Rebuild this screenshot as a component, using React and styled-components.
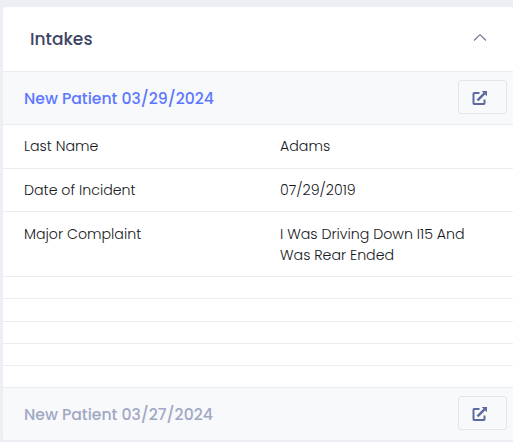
import React, { useState } from 'react'
import styled, { createGlobalStyle } from 'styled-components'

// blank answers still take up a thin row in the list
const fields = [
  { label: 'Last Name', value: 'Adams', height: 44 },
  { label: 'Date of Incident', value: '07/29/2019', height: 43 },
  { label: 'Major Complaint', value: 'I Was Driving Down I15 And Was Rear Ended', height: 65 },
  { height: 22 },
  { height: 23 },
  { height: 22 },
  { height: 22 },
  { height: 22 },
]

function OpenIcon() {
  return (
    <svg width='16' height='16' viewBox='0 0 16 16' fill='none'>
      <path d='M7.5 3H2.2Q1.5 3 1.5 3.7V13.3Q1.5 14 2.2 14H11.8Q12.5 14 12.5 13.3V9.5' stroke='#5d6aa0' strokeWidth='2' />
      <path d='M5.5 10.3L12.5 3.3' stroke='#5d6aa0' strokeWidth='2.4' />
      <path d='M9.7 1H15V6.3Z' fill='#5d6aa0' />
    </svg>
  )
}

function App() {
  const [isOpen, setIsOpen] = useState(true)

  return (
    <>
      <GlobalStyle />
      <Card>
        <CardHeader>
          <CardTitle>Intakes</CardTitle>
          <ToggleButton aria-label='Toggle intakes' onClick={() => setIsOpen((prev) => !prev)}>
            <svg width='14' height='8' viewBox='0 0 14 8' fill='none'>
              <path d='M1 6.5L7 0.7L13 6.5' stroke='#776b93' strokeWidth='1.1' />
            </svg>
          </ToggleButton>
        </CardHeader>
        {isOpen && (
          <>
            <IntakeHeader>
              <IntakeName $active>New Patient 03/29/2024</IntakeName>
              <OpenButton aria-label='Open intake'>
                <OpenIcon />
              </OpenButton>
            </IntakeHeader>
            {fields.map((field, i) => (
              <FieldRow key={i} $height={field.height}>
                {field.label && (
                  <>
                    <FieldText>{field.label}</FieldText>
                    <FieldText>{field.value}</FieldText>
                  </>
                )}
              </FieldRow>
            ))}
            <IntakeHeader $last>
              <IntakeName>New Patient 03/27/2024</IntakeName>
              <OpenButton aria-label='Open intake'>
                <OpenIcon />
              </OpenButton>
            </IntakeHeader>
          </>
        )}
      </Card>
    </>
  )
}

export default App

const GlobalStyle = createGlobalStyle`
  * {
    box-sizing: border-box;
  }
  body {
    margin: 0;
    overflow: hidden;
    background: #eeeef5;
    font-family: Poppins, Inter, sans-serif;
  }
`
const Card = styled.div`
  width: 511px;
  margin: 7px 0 0 3px;
  border-radius: 4px;
  overflow: hidden;
  background: #fff;
`
const CardHeader = styled.div`
  display: flex;
  align-items: center;
  justify-content: space-between;
  height: 65px;
  padding: 0 27px 2px;
  border-bottom: 1px solid #ebedf2;
`
const CardTitle = styled.h3`
  margin: 0;
  padding-top: 2px;
  color: #3d4465;
  font-size: 17.05px;
  font-weight: 500;
  line-height: 26px;
`
const ToggleButton = styled.button`
  display: flex;
  padding: 0;
  border: 0;
  background: none;
  cursor: pointer;
`
const IntakeHeader = styled.div`
  display: flex;
  align-items: flex-start;
  justify-content: space-between;
  height: ${({ $last }) => ($last ? 52 : 53)}px;
  padding: 8px 7px 0 21px;
  border-bottom: ${({ $last }) => ($last ? 0 : '1px solid #ebedf2')};
  background: #f8f9fb;
`
const IntakeName = styled.span`
  padding-top: 7px;
  color: ${({ $active }) => ($active ? '#5d78ff' : '#a1a8c3')};
  font-size: 15.65px;
  font-weight: 500;
  line-height: 24px;
`
const OpenButton = styled.button`
  display: flex;
  align-items: center;
  width: 49px;
  height: 34px;
  padding: 1px 0 0 13px;
  border: 1px solid #e2e5ec;
  border-radius: 3px;
  background: transparent;
  cursor: pointer;
`
const FieldRow = styled.div`
  display: grid;
  grid-template-columns: 256px 255px;
  height: ${({ $height }) => $height}px;
  padding-top: ${({ $height }) => ($height < 24 ? 0 : $height > 60 ? 12 : 11)}px;
  border-bottom: 1px solid #ebedf2;
`
const FieldText = styled.div`
  padding: 0 21px;
  color: #16181c;
  font-size: 14.2px;
  font-weight: 300;
  line-height: 21px;
`
